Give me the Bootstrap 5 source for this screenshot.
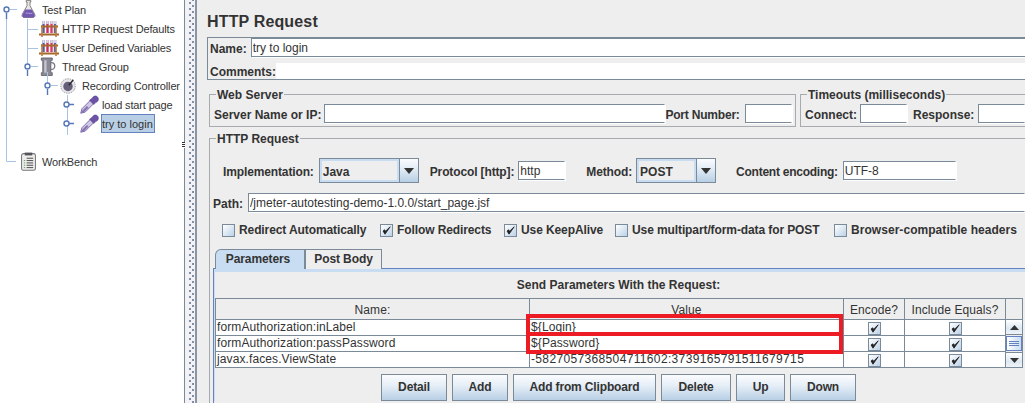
<!DOCTYPE html>
<html lang="en">
<head>
  <meta charset="UTF-8" />
  <meta name="viewport" content="width=device-width, initial-scale=1.0"/>
  <title>HTTP Request</title>
  <link href="https://cdn.jsdelivr.net/npm/bootstrap@5.3.0/dist/css/bootstrap.min.css" rel="stylesheet"/>
  <style>
    html, body { height: 403px; overflow: hidden; }
    body {
      background: #eeeeee;
      color: #333333;
      font: 12px/16px "Liberation Sans", Arial, sans-serif;
    }
    .app-shell { width: 1025px; height: 403px; }

    /* left tree */
    .tree-pane { width: 184px; height: 403px; background: #fff; flex: none; }
    .tree-lines { position: absolute; left: 0; top: 0; }
    .tree-row { height: 19px; line-height: 21px; font-size: 11px; letter-spacing: -.15px; white-space: nowrap; display: flex; align-items: center; }
    .tree-row svg { flex: none; }
    .tree-row span { display: block; }
    .lvl-0 { padding-left: 21px; }
    .lvl-1 { padding-left: 39px; }
    .lvl-2 { padding-left: 60px; }
    .lvl-3 { padding-left: 80px; }
    .txt-0, .txt-1, .txt-spool { padding-top: 2px; }
    .txt-0 { margin-left: 6px; }
    .txt-1 { margin-left: 3px; }
    .txt-spool { margin-left: 5px; }
    .tree-gap { height: 19px; }
    .tree-sel { background: #b8cfe5; outline: 1px solid #6382bf; outline-offset: -1px; padding: 0 0 0 1px; line-height: 20px; height: 19px; width: 54px; margin-left: 2px; letter-spacing: 0; }
    .split-bar {
      width: 13px; flex: none;
      border-left: 1px solid #7a8a99;
      border-right: 2px solid #8a96a3;
      background-color: #f2f2f6;
      background-image:
        radial-gradient(#7f8ea0 .6px, transparent .8px),
        radial-gradient(#7f8ea0 .6px, transparent .8px);
      background-size: 4px 6px, 4px 6px;
      background-position: 3px 0, 6px 3px;
      background-repeat: repeat-y;
      position: relative;
    }
    .split-grip { position: absolute; left: -3px; top: 142px; width: 3px; height: 6px; background: repeating-linear-gradient(#333 0 1px, #fff 1px 2px); }

    /* right side */
    .detail-pane { flex: 1; min-width: 0; overflow: hidden; padding-left: 10px; position: relative; }
    .panel-title { font-size: 16px; font-weight: 700; letter-spacing: .15px; line-height: 37px; height: 37px; padding-top: 3px; }
    .b { font-weight: 700; white-space: nowrap; flex: none; position: relative; top: 1px; }
    .name-box { border: 1px solid #7a8a99; border-right: 0; height: 43px; margin-right: -10px; padding-left: 2px; }
    .swing-input {
      border: 1px solid #7a8a99; border-right-color: #fff; border-bottom-color: #7a8a99;
      border-radius: 0; height: 19px; padding: 1px 1px 0; font: 12px/16px "Liberation Sans", Arial, sans-serif; color: #333;
      background: #fff; box-shadow: 1px 1px 0 #fff; flex: none;
    }
    .swing-input:focus { box-shadow: none; }
    .name-row { height: 19px; }
    .name-input { width: 790px; }
    .comment-row { margin-top: 6px; height: 16px; }
    .comment-fill { background: #fff; flex: 1; height: 16px; }

    fieldset.swing-set { border: 1px solid #a7abaf; padding: 0; min-width: 0; }
    fieldset.swing-set legend {
      float: none; width: auto; font-size: 12px; font-weight: 700; line-height: 18px; height: 16px;
      margin: 0 0 0 6px; padding: 0 1px;
    }
    .sets-top { margin-top: 6px; margin-left: 2px; }
    .set-web { width: 587px; height: 41px; flex: none; }
    .set-time { width: 260px; height: 41px; flex: none; margin-right: -60px; }
    .row-web { margin: 2px 0 0 4px; }
    .row-time { margin: 2px 0 0 4px; }
    .set-http { margin: 3px -60px 0 2px; height: 300px; }
    .w-server { width: 341px; margin-left: 3px; }
    .w-short { width: 47px; }
    .port-label { letter-spacing: -.2px; }
    .gap-port { margin-left: 5px; }
    .gap-conn { margin-right: 3px; }
    .gap-resp { margin-left: 6px; margin-right: 4px; }
    .impl-row { margin: 12px 0 0 13px; height: 25px; }
    .impl-row .b { letter-spacing: -.13px; }
    .impl-row .enc-label { letter-spacing: -.25px; }
    .combo { height: 25px; border: 1px solid #7a8a99; background: #eee; flex: none; }
    .combo-text { flex: 1; border: 2px solid #c8ddf2; padding-left: 1px; font-weight: 700; line-height: 23px; }
    .combo-arrow {
      width: 19px; border-left: 1px solid #7a8a99;
      background: linear-gradient(#fbfcfe, #dde8f3 50%, #b8cfe5);
    }
    .combo-impl { width: 100px; margin: 0 11px 0 5px; }
    .combo-method { width: 80px; margin: 0 20px 0 4px; }
    .input-proto { width: 47px; margin: 0 21px 0 4px; }
    .input-enc { width: 113px; margin-left: 5px; }
    .path-row { margin: 10px 0 0 3px; height: 19px; }
    .path-input { width: 777px; margin-left: 5px; }
    .checks-row { margin: 12px 0 0 12px; height: 13px; line-height: 13px; }
    .swing-check {
      width: 13px; height: 13px; border: 1px solid #7a8a99; flex: none;
      background: linear-gradient(135deg, #fff, #bcd2e8);
      display: inline-flex; align-items: center; justify-content: center;
    }
    .check-item { display: flex; align-items: center; gap: 4px; font-weight: 700; white-space: nowrap; letter-spacing: -.1px; }
    .chk-a { width: 158px; } .chk-b { width: 124px; } .chk-c { width: 111px; } .chk-d { width: 219px; }
    .chk-e { letter-spacing: .05px; }

    /* tabs */
    .swing-tabs { margin: 12px 0 0 5px; border: 0; height: 19px; flex-wrap: nowrap; }
    .swing-tabs .nav-link {
      border: 1px solid #7a8a99; border-bottom: 0; border-radius: 0; color: #333; height: 20px;
      padding: 0; font-weight: 700; line-height: 19px; letter-spacing: -.1px; text-align: center; margin: 0; background: #eee;
    }
    .swing-tabs .nav-link.active { background: #c8ddf2; color: #333; border-top-left-radius: 6px; border-color: #7a8a99; border-bottom: 0; position: relative; z-index: 1; padding-right: 4px; }
    .tab-a { width: 90px; } .tab-b { width: 77px; }
    .tab-body { margin-left: 3px; border-top: 1px solid #6382bf; border-left: 1px solid #6382bf; height: 140px; }
    .tab-inner { border-top: 3px solid #c8ddf2; border-left: 1px solid #c8ddf2; padding-left: 0; }
    .send-title { text-align: center; font-weight: 700; width: 807px; height: 26px; line-height: 26px; }

    .param-table { width: 808px; table-layout: fixed; margin: 0; border-color: #7a8a99; border-collapse: collapse; letter-spacing: .1px; }
    .param-table > :not(caption) > * > * {
      padding: 0 1px; height: 16px; line-height: 15px; background: #fff; color: #333; border: 1px solid #7a8a99;
      box-shadow: none; white-space: nowrap; overflow: hidden;
    }
    .param-table > thead > tr > th {
      height: 20px; font-weight: 400; text-align: center; background: #eee; line-height: 18px; padding-top: 2px; vertical-align: middle;
    }
    .param-table td.digits { letter-spacing: .35px; }
    .param-table td.chk-cell { text-align: center; vertical-align: middle; padding: 0; line-height: 0; }
    .param-table .swing-check { display: inline-flex; width: 13px; height: 13px; vertical-align: top; margin-top: 1px; }
    .param-table td.scroll-cell { padding: 0; background: #eee; vertical-align: top; }
    .scroll-wrap { height: 47px; display: flex; flex-direction: column; }
    .scroll-btn { height: 15px; flex: none; display: flex; align-items: center; justify-content: center; background: linear-gradient(#fff, #dde8f3 60%, #eef3f8); border-bottom: 1px solid #7a8a99; }
    .scroll-track { flex: 1; display: flex; padding-top: 1px; }
    .scroll-thumb { flex: 1; height: 15px; border: 1px solid #6382bf; background: linear-gradient(90deg, #fff, #c8ddf2); display: flex; align-items: center; justify-content: center; }
    .scroll-down { border-top: 1px solid #7a8a99; border-bottom: 0; }

    .action-row { margin: 6px 0 0 166px; gap: 5px; }
    .swing-btn {
      border: 1px solid #7a8a99; border-radius: 0; height: 27px; padding: 0; color: #333;
      font: 700 12px/25px "Liberation Sans", Arial, sans-serif; letter-spacing: -.15px;
      background: linear-gradient(#fbfcfe, #e4edf6 45%, #b8cfe5);
    }
    .btn-w1 { width: 66px; } .btn-w2 { width: 56px; } .btn-w3 { width: 143px; }
    .btn-w4 { width: 70px; } .btn-w5 { width: 49px; } .btn-w6 { width: 66px; }

    /* red marker drawn on top of the table */
    .red-mark { position: absolute; left: 329px; width: 317px; border: 4px solid #ed1c24; pointer-events: none; }
    .red-a { top: 314px; height: 22px; }
    .red-b { top: 332px; height: 22px; }
  </style>
</head>
<body>
  <svg width="0" height="0" class="d-block">
    <defs>
      <symbol id="i-flask" viewBox="0 0 16 20">
        <path d="M5.500 .5h5v1.500H9.600v4l5 9c.8 1.800 0 3.500-2 3.500H3.400c-2 0-2.800-1.700-2-3.500l5-9V2H5.500z" fill="#e9e7e3" stroke="#6f6c6a" stroke-width=".9"/>
        <path d="M4.600 10h6.800l3 5.300c.7 1.700 0 3.200-1.900 3.200H3.500c-1.900 0-2.600-1.500-1.900-3.200z" fill="#7258b0"/>
        <path d="M5 14c2-1 4 1 7 0" stroke="#b7a5dd" fill="none"/>
      </symbol>
      <symbol id="i-rack" viewBox="0 0 20 18">
        <path d="M4.500 1v12" stroke="#4e5fa6" stroke-width="2.400"/>
        <path d="M8.500 1v12" stroke="#cc2c5c" stroke-width="2.400"/>
        <path d="M12.500 1v12" stroke="#d83a66" stroke-width="2.400"/>
        <path d="M16 1v12" stroke="#5462ac" stroke-width="2.400"/>
        <path d="M3.300 2.500h2.400M7.300 2.500h2.400M11.300 2.500h2.400M14.800 2.500h2.400" stroke="#d6d8ea" stroke-width="3"/>
        <path d="M2 6.500h17M0 14.500h20" stroke="#a5682c" stroke-width="2"/>
        <path d="M3 5v12M17 5v12" stroke="#b87d3f" stroke-width="1.600"/>
      </symbol>
      <symbol id="i-spool" viewBox="0 0 15 20">
        <path d="M.5 1h11.500v2.500h-1.500v13H12v3H.5v-3H2v-13H.5z" fill="#8a8a96" stroke="#55555f" stroke-width=".8"/>
        <path d="M3.500 3.500h2.500v13H3.500z" fill="#c6c6ce"/>
        <path d="M10.500 6c5.500-1 5.500 8 0 7" fill="none" stroke="#77777f" stroke-width="1.300"/>
      </symbol>
      <symbol id="i-dial" viewBox="0 0 18 18">
        <circle cx="9" cy="9" r="8.200" fill="#e7e5ea" stroke="#8e8c98" stroke-dasharray="1.500 1.200"/>
        <circle cx="9" cy="9.500" r="5.300" fill="#655e78"/>
        <path d="M10 8l5-6" stroke="#222" stroke-width="1.500"/>
      </symbol>
      <symbol id="i-pipette" viewBox="0 0 20 20">
        <path d="M.8 19.200l1.200-4.700L11 5.500 14.500 9l-9 9z" fill="#cfc8e4" stroke="#6e5a9d" stroke-width=".9"/>
        <path d="M.8 19.200l1.500-2.700 5-5 1.700 1.700-5 5z" fill="#8672b5"/>
        <path d="M10 5.500l4.500 4.500 2-2c3-1 3.200-3.500 2.500-5-.8-2-3-2.500-4.500-1.500C13 2.500 13 3.500 12 4z" fill="#6d53a6" stroke="#523d8a" stroke-width=".6"/>
      </symbol>
      <symbol id="i-board" viewBox="0 0 16 20">
        <rect x=".6" y="1.600" width="14.800" height="17.800" rx="2" fill="#eeeeea" stroke="#77757d" stroke-width="1.100"/>
        <rect x="4" y=".5" width="8" height="3" fill="#55535b"/>
        <path d="M6 6.500h7M6 9h7M6 11.500h7M6 14h7M6 16.500h7" stroke="#45434b"/>
        <path d="M3 9h1.500M3 11.500h1.500M3 14h1.500M3 16.500h1.500" stroke="#5aa05a"/>
      </symbol>
      <symbol id="i-tick" viewBox="0 0 9 9">
        <path d="M1 5l2 3.200L8.200 .8 3.600 5.200 2.600 3.800z" fill="#222" stroke="#222" stroke-width=".8"/>
      </symbol>
    </defs>
  </svg>

  <div class="d-flex app-shell">
    <aside class="tree-pane position-relative">
      <svg class="tree-lines" width="184" height="180">
        <g stroke="#a9c4e2" fill="none">
          <path d="M6.500 14V161.500H16M10 9.500H17M27.500 19V67M27.500 29.500H38M27.500 48.500H38M31 66.500H38M47.500 72V86M51 85.500H58M67.500 95V135"/>
        </g>
        <g stroke="#5677b8" fill="#fff" stroke-width="1.400">
          <path d="M6.500 13v6M27.500 70v6M47.500 89v6" fill="none"/>
          <circle cx="6.500" cy="9.500" r="2.500"/>
          <circle cx="27.500" cy="66.500" r="2.500"/>
          <circle cx="47.500" cy="85.500" r="2.500"/>
          <path d="M69 104.500h5M69 123.500h5" fill="none"/>
          <circle cx="66.500" cy="104.500" r="2.500"/>
          <circle cx="66.500" cy="123.500" r="2.500"/>
        </g>
      </svg>
      <ul class="list-unstyled m-0">
        <li class="tree-row lvl-0"><svg width="15" height="19"><use href="#i-flask"/></svg><span class="txt-0">Test Plan</span></li>
        <li class="tree-row lvl-1"><svg width="20" height="18"><use href="#i-rack"/></svg><span class="txt-1">HTTP Request Defaults</span></li>
        <li class="tree-row lvl-1"><svg width="20" height="18"><use href="#i-rack"/></svg><span class="txt-1">User Defined Variables</span></li>
        <li class="tree-row lvl-1"><svg width="18" height="19"><use href="#i-spool"/></svg><span class="txt-spool">Thread Group</span></li>
        <li class="tree-row lvl-2"><svg width="16" height="16"><use href="#i-dial"/></svg><span class="txt-0">Recording Controller</span></li>
        <li class="tree-row lvl-3"><svg width="19" height="19"><use href="#i-pipette"/></svg><span class="txt-1">load start page</span></li>
        <li class="tree-row lvl-3"><svg width="19" height="19"><use href="#i-pipette"/></svg><span class="tree-sel">try to login</span></li>
        <li class="tree-gap"></li>
        <li class="tree-row lvl-0"><svg width="15" height="19"><use href="#i-board"/></svg><span class="txt-0">WorkBench</span></li>
      </ul>
    </aside>
    <div class="split-bar"><span class="split-grip"></span></div>

    <main class="detail-pane">
      <div class="panel-title">HTTP Request</div>
      <div class="name-box">
        <div class="d-flex align-items-center name-row">
          <label class="b me-1">Name:</label>
          <input class="swing-input name-input" type="text" value="try to login">
        </div>
        <div class="d-flex align-items-center comment-row">
          <label class="b">Comments:</label>
          <div class="comment-fill"></div>
        </div>
      </div>

      <div class="d-flex gap-1 sets-top">
        <fieldset class="swing-set set-web">
          <legend>Web Server</legend>
          <div class="d-flex align-items-center row-web">
            <label class="b">Server Name or IP:</label>
            <input class="swing-input w-server" type="text">
            <label class="b port-label">Port Number:</label>
            <input class="swing-input w-short gap-port" type="text">
          </div>
        </fieldset>
        <fieldset class="swing-set set-time">
          <legend>Timeouts (milliseconds)</legend>
          <div class="d-flex align-items-center row-time">
            <label class="b gap-conn">Connect:</label>
            <input class="swing-input w-short" type="text">
            <label class="b gap-resp">Response:</label>
            <input class="swing-input w-short" type="text">
          </div>
        </fieldset>
      </div>

      <fieldset class="swing-set set-http">
        <legend>HTTP Request</legend>
        <div class="d-flex align-items-center impl-row">
          <label class="b">Implementation:</label>
          <div class="combo combo-impl d-flex">
            <span class="combo-text">Java</span>
            <span class="combo-arrow d-flex align-items-center justify-content-center"><svg width="10" height="6"><path d="M0 0h10L5 6z" fill="#333"/></svg></span>
          </div>
          <label class="b">Protocol [http]:</label>
          <input class="swing-input input-proto" type="text" value="http">
          <label class="b">Method:</label>
          <div class="combo combo-method d-flex">
            <span class="combo-text">POST</span>
            <span class="combo-arrow d-flex align-items-center justify-content-center"><svg width="10" height="6"><path d="M0 0h10L5 6z" fill="#333"/></svg></span>
          </div>
          <label class="b enc-label">Content encoding:</label>
          <input class="swing-input input-enc" type="text" value="UTF-8">
        </div>
        <div class="d-flex align-items-center path-row">
          <label class="b">Path:</label>
          <input class="swing-input path-input" type="text" value="/jmeter-autotesting-demo-1.0.0/start_page.jsf">
        </div>
        <div class="d-flex checks-row">
          <span class="check-item chk-a"><span class="swing-check"></span>Redirect Automatically</span>
          <span class="check-item chk-b"><span class="swing-check"><svg width="9" height="9"><use href="#i-tick"/></svg></span>Follow Redirects</span>
          <span class="check-item chk-c"><span class="swing-check"><svg width="9" height="9"><use href="#i-tick"/></svg></span>Use KeepAlive</span>
          <span class="check-item chk-d"><span class="swing-check"></span>Use multipart/form-data for POST</span>
          <span class="check-item chk-e"><span class="swing-check"></span>Browser-compatible headers</span>
        </div>

        <ul class="nav nav-tabs swing-tabs">
          <li class="nav-item"><a class="nav-link active tab-a" href="#">Parameters</a></li>
          <li class="nav-item"><a class="nav-link tab-b" href="#">Post Body</a></li>
        </ul>
        <div class="tab-body">
          <div class="tab-inner">
            <div class="send-title">Send Parameters With the Request:</div>
            <table class="table table-bordered param-table">
              <colgroup>
                <col style="width:314px"><col style="width:314px"><col style="width:61px"><col style="width:101px"><col style="width:17px">
              </colgroup>
              <thead>
                <tr><th>Name:</th><th>Value</th><th>Encode?</th><th>Include Equals?</th><th></th></tr>
              </thead>
              <tbody>
                <tr>
                  <td>formAuthorization:inLabel</td><td>${Login}</td>
                  <td class="chk-cell"><span class="swing-check"><svg width="9" height="9"><use href="#i-tick"/></svg></span></td>
                  <td class="chk-cell"><span class="swing-check"><svg width="9" height="9"><use href="#i-tick"/></svg></span></td>
                  <td class="scroll-cell" rowspan="3">
                    <div class="scroll-wrap">
                      <div class="scroll-btn"><svg width="9" height="5"><path d="M0 5h9L4.500 0z" fill="#333"/></svg></div>
                      <div class="scroll-track"><div class="scroll-thumb"><svg width="10" height="5"><path d="M0 .5h10M0 2.500h10M0 4.500h10" stroke="#6382bf"/></svg></div></div>
                      <div class="scroll-btn scroll-down"><svg width="9" height="5"><path d="M0 0h9L4.500 5z" fill="#333"/></svg></div>
                    </div>
                  </td>
                </tr>
                <tr>
                  <td>formAuthorization:passPassword</td><td>${Password}</td>
                  <td class="chk-cell"><span class="swing-check"><svg width="9" height="9"><use href="#i-tick"/></svg></span></td>
                  <td class="chk-cell"><span class="swing-check"><svg width="9" height="9"><use href="#i-tick"/></svg></span></td>
                </tr>
                <tr>
                  <td>javax.faces.ViewState</td><td class="digits">-5827057368504711602:3739165791511679715</td>
                  <td class="chk-cell"><span class="swing-check"><svg width="9" height="9"><use href="#i-tick"/></svg></span></td>
                  <td class="chk-cell"><span class="swing-check"><svg width="9" height="9"><use href="#i-tick"/></svg></span></td>
                </tr>
              </tbody>
            </table>
            <div class="d-flex action-row">
              <button class="btn swing-btn btn-w1">Detail</button>
              <button class="btn swing-btn btn-w2">Add</button>
              <button class="btn swing-btn btn-w3">Add from Clipboard</button>
              <button class="btn swing-btn btn-w4">Delete</button>
              <button class="btn swing-btn btn-w5">Up</button>
              <button class="btn swing-btn btn-w6">Down</button>
            </div>
          </div>
        </div>
      </fieldset>
      <div class="red-mark red-a"></div>
      <div class="red-mark red-b"></div>
    </main>
  </div>
  <script src="https://cdn.jsdelivr.net/npm/bootstrap@5.3.0/dist/js/bootstrap.bundle.min.js"></script>
</body>
</html>
